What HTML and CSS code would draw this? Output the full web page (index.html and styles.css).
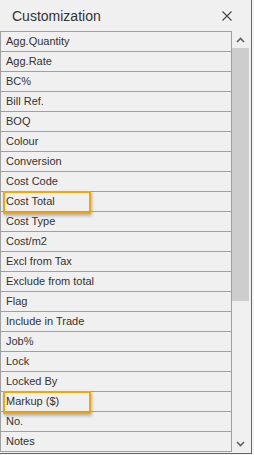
FILE: index.html
```html
<!DOCTYPE html>
<html lang="en">
<head>
  <meta charset="UTF-8" />
  <title>Customization</title>
  <link rel="stylesheet" href="styles.css">
</head>
<body>

<div class="window">
  <div class="titlebar">
    <span class="title">Customization</span>
    <svg class="close" width="10" height="10" viewBox="0 0 10 10">
      <path d="M0.5 0.5 L9.5 9.5 M9.5 0.5 L0.5 9.5" stroke="#444" stroke-width="1.1" fill="none" />
    </svg>
  </div>

  <div class="list">
    <div class="rows">
      <div class="row">Agg.Quantity</div>
      <div class="row">Agg.Rate</div>
      <div class="row">BC%</div>
      <div class="row">Bill Ref.</div>
      <div class="row">BOQ</div>
      <div class="row">Colour</div>
      <div class="row">Conversion</div>
      <div class="row">Cost Code</div>
      <div class="row marked">Cost Total</div>
      <div class="row">Cost Type</div>
      <div class="row">Cost/m2</div>
      <div class="row">Excl from Tax</div>
      <div class="row">Exclude from total</div>
      <div class="row">Flag</div>
      <div class="row">Include in Trade</div>
      <div class="row">Job%</div>
      <div class="row">Lock</div>
      <div class="row">Locked By</div>
      <div class="row marked">Markup ($)</div>
      <div class="row">No.</div>
      <div class="row">Notes</div>
    </div>

    <!-- scrollbar -->
    <div class="scrollbar">
      <div class="arrow">
        <svg width="9" height="6" viewBox="0 0 9 6"><path d="M1 5 L4.5 1.5 L8 5" stroke="#606060" stroke-width="1.6" fill="none" /></svg>
      </div>
      <div class="thumb"></div>
      <div class="track"></div>
      <div class="arrow">
        <svg width="9" height="6" viewBox="0 0 9 6"><path d="M1 1 L4.5 4.5 L8 1" stroke="#606060" stroke-width="1.6" fill="none" /></svg>
      </div>
    </div>
  </div>
</div>

</body>
</html>
```

FILE: styles.css
```css
body {
  margin: 0;
  background: #f6f6f6;
  font-family: 'Liberation Sans', Arial, sans-serif;
}
.window {
  width: 251px;
  height: 453px;
  background: #f0f0f0;
  border-right: 1px solid #1a78d2;
  border-bottom: 1px solid #1a78d2;
}
.titlebar {
  height: 31px;
  display: flex;
  align-items: center;
  justify-content: space-between;
  padding: 0 19px 0 12px;
}
.title {
  font-size: 14px;
  color: #333;
}
.close {
  margin-top: 0;
}
.list {
  display: flex;
  height: 421px;
}
.rows {
  width: 232px;
  border-left: 1px solid #a0a0a0;
  border-right: 1px solid #a0a0a0;
  border-bottom: 1px solid #a0a0a0;
  box-sizing: border-box;
  overflow: hidden;
}
.row {
  position: relative;
  height: 19px;
  line-height: 19px;
  border-top: 1px solid #a0a0a0;
  padding-left: 5px;
  font-size: 11px;
  color: #333;
  white-space: nowrap;
}
.row.marked::after {
  content: '';
  position: absolute;
  left: 2px;
  top: -1px;
  width: 84px;
  height: 19px;
  border: 2px solid #f5a50a;
  box-shadow: 1px 2px 3px rgba(0, 0, 0, 0.25);
}
.scrollbar {
  width: 17px;
  display: flex;
  flex-direction: column;
}
.arrow {
  height: 17px;
  display: flex;
  align-items: center;
  justify-content: center;
}
.thumb {
  height: 253px;
  background: #cdcdcd;
}
.track {
  flex: 1;
}
```
